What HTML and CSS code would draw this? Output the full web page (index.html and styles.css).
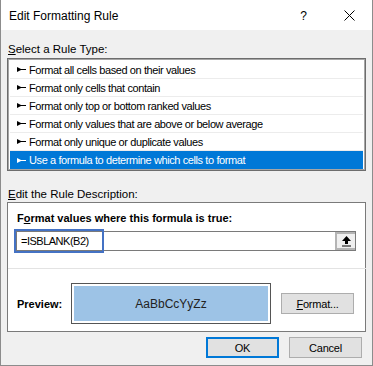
FILE: index.html
```html
<!DOCTYPE html>
<html lang="en">
<head>
    <meta charset="UTF-8">
    <title>Edit Formatting Rule</title>
    <link rel="stylesheet" href="styles.css">
</head>
<body>
    <div class="dialog">
        <header class="titlebar">
            <span class="title">Edit Formatting Rule</span>
            <span class="help">?</span>
            <svg class="close" width="11" height="11" viewBox="0 0 11 11">
                <path d="M0.5 0.5 L10.5 10.5 M10.5 0.5 L0.5 10.5" stroke="#000" stroke-width="1" fill="none"/>
            </svg>
        </header>

        <main class="content">
            <div class="section-label"><u>S</u>elect a Rule Type:</div>
            <div class="rule-list">
                <div class="rule-item"><svg class="bullet" width="9" height="5" viewBox="0 0 9 5"><polygon points="0,0 4,2 9,2 9,3 4,3 0,5"/></svg>Format all cells based on their values</div>
                <div class="rule-item"><svg class="bullet" width="9" height="5" viewBox="0 0 9 5"><polygon points="0,0 4,2 9,2 9,3 4,3 0,5"/></svg>Format only cells that contain</div>
                <div class="rule-item"><svg class="bullet" width="9" height="5" viewBox="0 0 9 5"><polygon points="0,0 4,2 9,2 9,3 4,3 0,5"/></svg>Format only top or bottom ranked values</div>
                <div class="rule-item"><svg class="bullet" width="9" height="5" viewBox="0 0 9 5"><polygon points="0,0 4,2 9,2 9,3 4,3 0,5"/></svg>Format only values that are above or below average</div>
                <div class="rule-item"><svg class="bullet" width="9" height="5" viewBox="0 0 9 5"><polygon points="0,0 4,2 9,2 9,3 4,3 0,5"/></svg>Format only unique or duplicate values</div>
                <div class="rule-item selected"><svg class="bullet" width="9" height="5" viewBox="0 0 9 5"><polygon points="0,0 4,2 9,2 9,3 4,3 0,5"/></svg>Use a formula to determine which cells to format</div>
            </div>

            <div class="section-label second"><u>E</u>dit the Rule Description:</div>
            <div class="desc-box">
                <div class="desc-label">F<u>o</u>rmat values where this formula is true:</div>
                <div class="formula">
                    <span class="formula-text">=ISBLANK(B2)</span>
                    <span class="ref-btn">
                        <svg width="11" height="11" viewBox="0 0 11 11">
                            <polygon points="5.5,0 10,5 7,5 7,8 4,8 4,5 1,5"/>
                            <rect x="1" y="9.5" width="9" height="1"/>
                        </svg>
                    </span>
                    <span class="highlight"></span>
                </div>
                <div class="divider"></div>
                <div class="preview-row">
                    <span class="preview-label">Preview:</span>
                    <div class="preview-frame">
                        <div class="preview-fill">AaBbCcYyZz</div>
                    </div>
                    <button class="btn format-btn"><u>F</u>ormat...</button>
                </div>
            </div>

            <div class="actions">
                <button class="btn default">OK</button>
                <button class="btn">Cancel</button>
            </div>
        </main>
    </div>
</body>
</html>
```

FILE: styles.css
```css
* {
    margin: 0;
    padding: 0;
    box-sizing: border-box;
}

body {
    font-family: 'Liberation Sans', Arial, sans-serif;
    font-size: 12px;
    color: #000;
    background: #fff;
}

.dialog {
    width: 373px;
    height: 366px;
    background: #f0f0f0;
    border: 1px solid #8c8c8c;
    border-top: none;
    display: flex;
    flex-direction: column;
}

.titlebar {
    height: 30px;
    background: #fff;
    display: flex;
    align-items: center;
    padding-left: 8px;
    padding-top: 1px;
}

.title {
    flex: 1;
}

.help {
    margin-right: 37px;
}

.close {
    margin-right: 17px;
}

.content {
    padding: 0 6px;
}

.section-label {
    font-size: 11.5px;
    line-height: 16px;
    margin-top: 10px;
    padding-top: 1px;
    padding-left: 1px;
    height: 18px;
}

.section-label.second {
    margin-top: 13px;
    padding-top: 2px;
}

.rule-list {
    border: 1px solid #6d6d6d;
    box-shadow: inset 0 0 0 1px #a6a6a6;
    background: #fff;
    padding: 2px 2px 1px;
    height: 113px;
    font-size: 11px;
    letter-spacing: -0.4px;
}

.rule-item {
    height: 18px;
    display: flex;
    align-items: center;
    padding-left: 7px;
    border-bottom: 1px solid #ececec;
}

.rule-item:last-child {
    border-bottom: none;
}

.rule-item.selected {
    background: #0078d7;
    color: #fff;
}

.bullet {
    margin-right: 3px;
    fill: #000;
}

.selected .bullet {
    fill: #fff;
}

.desc-box {
    background: #fff;
    border: 1px solid #7a7a7a;
    height: 130px;
    padding: 7px 8px 0 9px;
}

.desc-label {
    font-weight: 700;
    font-size: 11px;
    line-height: 16px;
}

.formula {
    position: relative;
    margin-top: 5px;
    margin-left: -1px;
    height: 20px;
    width: 340px;
    border: 1px solid #7a7a7a;
    display: flex;
    align-items: center;
    padding-left: 4px;
    font-size: 11px;
    letter-spacing: -0.5px;
}

.formula-text {
    flex: 1;
}

.ref-btn {
    width: 20px;
    height: 18px;
    background: #f0f0f0;
    border: 2px solid #b4b4b4;
    border-right: none;
    display: flex;
    align-items: center;
    justify-content: center;
}

.highlight {
    position: absolute;
    left: -3px;
    top: -3px;
    width: 90px;
    height: 24px;
    border: 2px solid #4472c4;
}

.divider {
    height: 1px;
    background: #e3e3e3;
    margin: 17px -9px 0 -9px;
}

.preview-row {
    display: flex;
    align-items: center;
    margin-top: 14px;
}

.preview-label {
    font-weight: 700;
    font-size: 11px;
    width: 54px;
}

.preview-frame {
    width: 200px;
    height: 41px;
    border: 1px solid #555;
    padding: 2px;
    background: #fff;
}

.preview-fill {
    height: 100%;
    background: #9dc3e6;
    display: flex;
    align-items: center;
    justify-content: center;
    font-size: 12px;
    color: #222;
}

.btn {
    font-family: inherit;
    font-size: 11px;
    letter-spacing: -0.2px;
    color: #000;
    background: #e1e1e1;
    border: 1px solid #adadad;
    width: 73px;
    height: 21px;
}

.format-btn {
    margin-left: 10px;
}

.actions {
    display: flex;
    justify-content: flex-end;
    gap: 10px;
    margin-top: 5px;
    padding-right: 4px;
}

.btn.default {
    border: 2px solid #0078d7;
}
```
